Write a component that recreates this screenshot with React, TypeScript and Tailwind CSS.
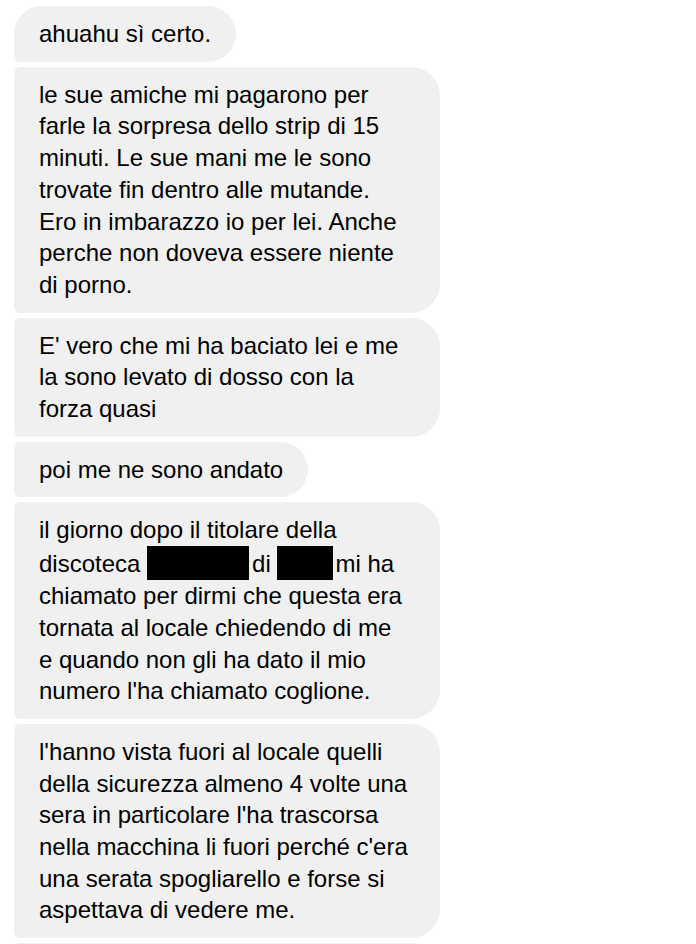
import React from "react";

type Part = string | { redact: string };

interface Msg {
  lines: Part[][];
  first?: boolean;
  wide?: boolean;
}

const messages: Msg[] = [
  { lines: [["ahuahu sì certo."]], first: true },
  {
    wide: true,
    lines: [
      ["le sue amiche mi pagarono per"],
      ["farle la sorpresa dello strip di 15"],
      ["minuti. Le sue mani me le sono"],
      ["trovate fin dentro alle mutande."],
      ["Ero in imbarazzo io per lei. Anche"],
      ["perche non doveva essere niente"],
      ["di porno."],
    ],
  },
  {
    wide: true,
    lines: [
      ["E' vero che mi ha baciato lei e me"],
      ["la sono levato di dosso con la"],
      ["forza quasi"],
    ],
  },
  { lines: [["poi me ne sono andato"]] },
  {
    wide: true,
    lines: [
      ["il giorno dopo il titolare della"],
      [
        "discoteca ",
        { redact: "w-[102px] mr-[3px]" },
        "di ",
        { redact: "w-[56px] mr-[2px]" },
        "mi ha",
      ],
      ["chiamato per dirmi che questa era"],
      ["tornata al locale chiedendo di me"],
      ["e quando non gli ha dato il mio"],
      ["numero l'ha chiamato coglione."],
    ],
  },
  {
    wide: true,
    lines: [
      ["l'hanno vista fuori al locale quelli"],
      ["della sicurezza almeno 4 volte una"],
      ["sera in particolare l'ha trascorsa"],
      ["nella macchina li fuori perché c'era"],
      ["una serata spogliarello e forse si"],
      ["aspettava di vedere me."],
    ],
  },
  { wide: true, lines: [["\u00a0"]] },
];

const Bubble: React.FC<{ msg: Msg }> = ({ msg }) => {
  return (
    <div
      className={
        "self-start bg-[#f0f0f0] px-[25px] py-[12px] text-[24px] leading-[31.7px] text-black rounded-r-[29px] rounded-bl-[6px] " +
        (msg.first ? "rounded-tl-[28px] " : "rounded-tl-[6px] ") +
        (msg.wide ? "w-[426px]" : "")
      }
    >
      {msg.lines.map((line, li) => (
        <div key={li} className="whitespace-nowrap">
          {line.map((p, i) =>
            typeof p === "string" ? (
              <React.Fragment key={i}>{p}</React.Fragment>
            ) : (
              // parti oscurate nello screenshot
              <span
                key={i}
                className={"inline-block h-[34px] bg-black align-[-8px] " + p.redact}
              />
            )
          )}
        </div>
      ))}
    </div>
  );
};

export default function App() {
  return (
    <div className="h-screen overflow-hidden bg-white pl-[14px] pt-[6px] flex flex-col gap-[5px] font-['Liberation_Sans',Arial,sans-serif]">
      {messages.map((m, i) => (
        <Bubble key={i} msg={m} />
      ))}
    </div>
  );
}
